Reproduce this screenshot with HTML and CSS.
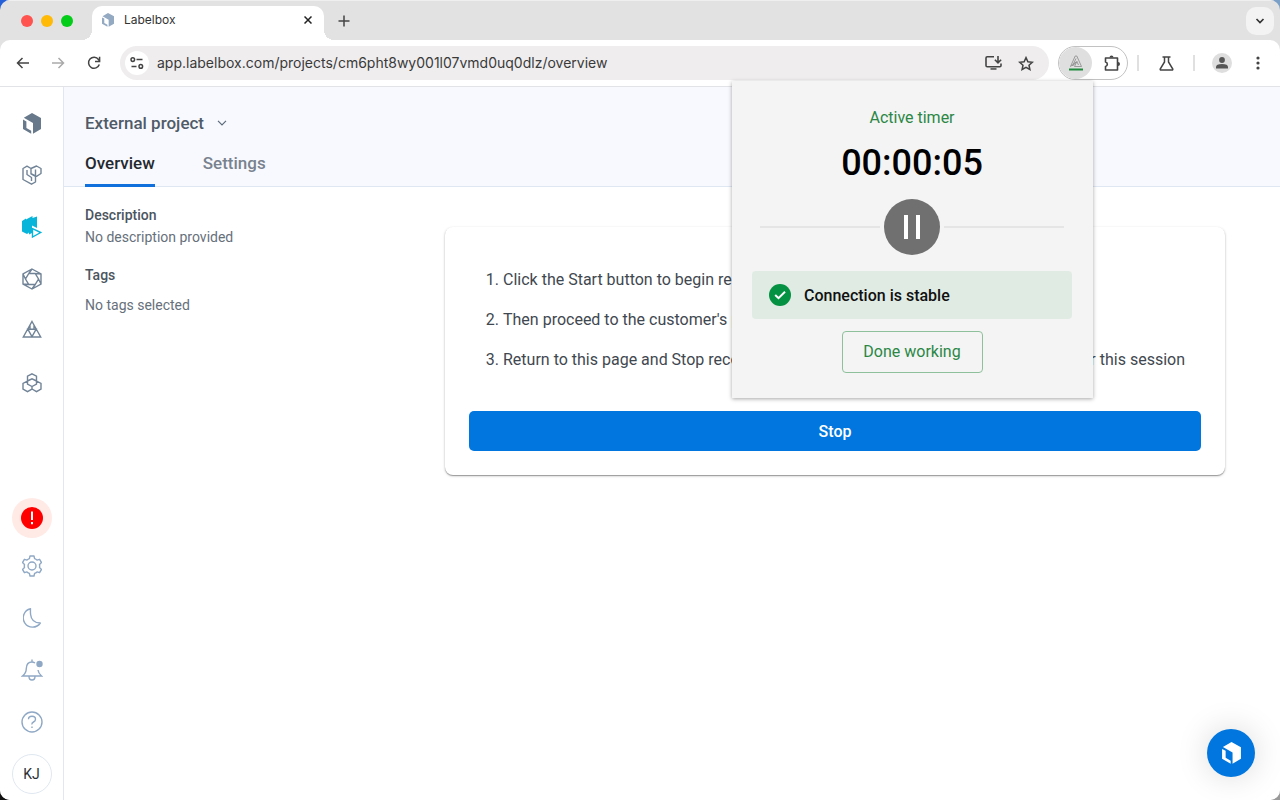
FILE: index.html
```html
<!DOCTYPE html>
<html lang="en">
<head>
  <meta charset="UTF-8" />
  <meta name="viewport" content="width=device-width, initial-scale=1.0"/>
  <title>Labelbox</title>
  <link rel="stylesheet" href="styles.css">
</head>
<body>

  <!-- shared logo -->
  <svg class="defs" width="0" height="0" aria-hidden="true">
    <symbol id="logo" viewBox="0 0 18 21">
      <path d="M9 0 18 5V16L10 20.7V10L.8 4.8Z"/>
      <path d="M0 6.6 3.4 8.4V15L8.2 17.8V20.7L0 16Z"/>
    </symbol>
  </svg>

  <div class="window">

    <!-- Tab strip -->
    <div class="tabstrip">
      <div class="lights"><i class="red"></i><i class="yellow"></i><i class="green"></i></div>
      <div class="tab">
        <svg class="favicon" width="12" height="14"><use href="#logo"/></svg>
        <span class="tab-title">Labelbox</span>
        <button class="plain" aria-label="Close tab">
          <svg width="8" height="8" viewBox="0 0 8 8"><path d="M.5.5l7 7M7.500.5l-7 7" stroke="#222" stroke-width="1.5"/></svg>
        </button>
      </div>
      <button class="plain new-tab" aria-label="New tab">
        <svg width="12" height="12" viewBox="0 0 12 12"><path d="M6 .5v11M.5 6h11" stroke="#444" stroke-width="1.5"/></svg>
      </button>
      <button class="plain tab-search" aria-label="Search tabs">
        <svg width="10" height="6" viewBox="0 0 10 6"><path d="M1.500 1 5 4.500 8.500 1" fill="none" stroke="#333" stroke-width="1.700"/></svg>
      </button>
    </div>

    <!-- Toolbar -->
    <div class="toolbar">
      <button class="plain nav" aria-label="Back">
        <svg width="13" height="12" viewBox="0 0 13 12"><path d="M13 6H1.500M6.500 1l-5 5 5 5" fill="none" stroke="#444" stroke-width="1.500"/></svg>
      </button>
      <button class="plain nav" aria-label="Forward">
        <svg width="13" height="12" viewBox="0 0 13 12"><path d="M0 6h11.500M6.500 1l5 5-5 5" fill="none" stroke="#aaa" stroke-width="1.500"/></svg>
      </button>
      <button class="plain nav" aria-label="Reload">
        <svg width="14" height="14" viewBox="0 0 14 14"><path d="M12.300 8.500A5.500 5.500 0 1 1 11.500 3.500L12.600 5" fill="none" stroke="#444" stroke-width="1.500"/><path d="M12.600.8V5.400H8" fill="none" stroke="#444" stroke-width="1.500"/></svg>
      </button>
      <div class="omnibox">
        <span class="site-info">
          <svg width="14" height="12" viewBox="0 0 14 12" fill="none" stroke="#444" stroke-width="1.500"><circle cx="2.800" cy="2.600" r="1.800"/><path d="M6.500 2.600h6M1.500 9.400h5"/><circle cx="10.800" cy="9.400" r="1.800"/></svg>
        </span>
        <input type="text" class="url" aria-label="Address" value="app.labelbox.com/projects/cm6pht8wy001l07vmd0uq0dlz/overview" />
        <button class="plain" aria-label="Install app">
          <svg width="17" height="16" viewBox="0 0 17 16" fill="none" stroke="#444" stroke-width="1.600"><path d="M9 1.800H2.200Q1 1.800 1 3V10.500Q1 11.800 2.200 11.800H14.800Q16 11.800 16 10.500V8.500"/><path d="M13 1V7.500M9.900 4.800 13 7.900 16.100 4.800"/><path d="M5.500 13.200h6v1.500h-6z" fill="#444" stroke="none"/></svg>
        </button>
        <button class="plain" aria-label="Bookmark this page">
          <svg width="16" height="15" viewBox="0 0 16 15"><path d="M8 1.600 9.900 5.700 14.300 6.200 11 9.200 11.900 13.500 8 11.300 4.100 13.500 5 9.200 1.700 6.200 6.100 5.700Z" fill="none" stroke="#444" stroke-width="1.500"/></svg>
        </button>
      </div>
      <div class="extensions">
        <button class="plain ext-active" aria-label="Timer extension">
          <svg width="14" height="16" viewBox="0 0 14 16"><path d="M1.500 11.500 6.200 1h1.600l4.700 10.500H5.500L7.800 6.500 9.500 10M7 3.500 3.500 11 8 6.500M1.500 11.500 7 7" fill="none" stroke="#888" stroke-width=".8"/><path d="M0 13.500h14v2H0z" fill="#1f8a3b"/></svg>
        </button>
        <button class="plain ext-menu" aria-label="Extensions">
          <svg width="17" height="17" viewBox="0 0 17 17"><path d="M1.500 3H13.500V15H1.500V11.500A2.300 2.300 0 0 0 1.500 7Z" fill="none" stroke="#444" stroke-width="1.600" stroke-linejoin="round"/><path d="M5.500 2.500a2 2 0 0 1 4 0ZM14 7a2 2 0 0 1 0 4Z" fill="#444"/></svg>
        </button>
      </div>
      <span class="sep"></span>
      <button class="plain tool" aria-label="Labs">
        <svg width="15" height="15" viewBox="0 0 15 15"><path d="M3.500 1h8M5.500 1v5L1.200 13Q1 14 2 14h11q1 0 .8-1L9.500 6V1" fill="none" stroke="#444" stroke-width="1.500"/></svg>
      </button>
      <span class="sep"></span>
      <button class="plain tool" aria-label="Profile">
        <svg width="20" height="20" viewBox="0 0 20 20"><circle cx="10" cy="10" r="10" fill="#dedede"/><circle cx="10" cy="7" r="2.900" fill="#555"/><path d="M4 15.500V14q0-3 6-3t6 3v1.500Z" fill="#555"/></svg>
      </button>
      <button class="plain tool" aria-label="Browser menu">
        <svg width="4" height="14" viewBox="0 0 4 14" fill="#444"><circle cx="2" cy="2" r="1.600"/><circle cx="2" cy="7" r="1.600"/><circle cx="2" cy="12" r="1.600"/></svg>
      </button>
    </div>

    <div class="app">

      <!-- Sidebar -->
      <nav class="sidebar">
        <a href="#" class="item" aria-label="Home"><svg class="mark" width="18" height="21"><use href="#logo"/></svg></a>
        <a href="#" class="item" aria-label="Catalog">
          <svg class="line" width="20" height="20" viewBox="0 0 20 20" stroke-linejoin="round"><path d="M1 3.500 5 1.200 9 3.500V9L13.500 11.500V17L9.500 19.200 1 14.500ZM5 5V9.500L9.500 12.500V16M9 3.500 14.500 1 19 3.500V8.500L14.500 11.300 9 8.500M13.500 4.500V11"/></svg>
        </a>
        <a href="#" class="item" aria-label="Annotate">
          <svg width="20" height="22" viewBox="0 0 20 22"><path d="M0 5 4 2.500V3.500L10.500 0V2L15 .5V12L10 9.500V17L7 18.500V16.500L5 18 0 15.500Z" fill="#08b5da"/><path d="M10.500 12.500V21L18.700 16.500Z" fill="#fff" stroke="#08b5da" stroke-width="1.400"/></svg>
        </a>
        <a href="#" class="item" aria-label="Model">
          <svg class="line" width="20" height="22" viewBox="0 0 20 22"><path d="M10 1 19 6V16L10 21 1 16V6ZM6.800 5.500H13.200L16.500 11 13.200 16.500H6.800L3.500 11ZM10 1 6.800 5.500M19 6 13.200 5.500M19 16 16.500 11M10 21 13.200 16.500M1 16 6.800 16.500M1 6 3.500 11"/></svg>
        </a>
        <a href="#" class="item" aria-label="Workforce">
          <svg class="line" width="20" height="22" viewBox="0 0 20 22"><path d="M10 1.500 18.700 17H1.300ZM5.800 9.200h8.400L10 16.500ZM8 5.500V9M12 5.500V9"/></svg>
        </a>
        <a href="#" class="item" aria-label="Foundry">
          <svg class="line" width="20" height="20" viewBox="0 0 20 20"><path d="M10 .8 14.500 3.200V11L10 13.500 5.500 11V3.200ZM5.500 8 1 10.500V16L5.500 18.600 10 16V13.500M14.500 8 19 10.500V16L14.500 18.600 10 16M5.500 8 10 5.800 14.500 8"/></svg>
        </a>

        <div class="spacer"></div>

        <a href="#" class="item alert" aria-label="Alerts">
          <span><svg width="22" height="22" viewBox="0 0 22 22"><circle cx="11" cy="11" r="11" fill="#f00"/><path d="M11 4.500v8.500M11 15v2.200" stroke="#fff" stroke-width="2"/></svg></span>
        </a>
        <a href="#" class="item soft" aria-label="Settings">
          <svg class="line" width="20" height="22" viewBox="0 0 20 22"><path d="M8 1H12L12.600 3.700Q14 4.200 15 5.100L17.600 4.300 19.500 7.600 17.500 9.500Q17.800 11 17.500 12.500L19.500 14.400 17.600 17.700 15 16.900Q14 17.800 12.600 18.300L12 21H8L7.400 18.300Q6 17.800 5 16.900L2.400 17.700.5 14.400 2.500 12.500Q2.200 11 2.500 9.500L.5 7.600 2.400 4.300 5 5.100Q6 4.200 7.400 3.700Z" stroke-linejoin="round"/><circle cx="10" cy="11" r="4"/></svg>
        </a>
        <a href="#" class="item soft" aria-label="Dark mode">
          <svg class="line" width="18" height="20" viewBox="0 0 18 20"><path d="M7.500.8A9.300 9.300 0 1 0 17.300 15Q8.500 15 7.600 6.500 7.300 3.500 7.500.8Z" stroke-linejoin="round"/></svg>
        </a>
        <a href="#" class="item soft" aria-label="Notifications">
          <svg class="line" width="22" height="22" viewBox="0 0 22 22"><path d="M14 4Q12.500 3 11 3 5.500 3 5.300 9.500 5.300 14 1.500 17H20.500Q17.500 14.500 17 11M11 .5V3M8 17.500Q8 21 11 21T14 17.500"/><circle cx="18.500" cy="5" r="3.200" fill="#8fa8c5" stroke="none"/></svg>
        </a>
        <a href="#" class="item soft" aria-label="Help">
          <svg class="line" width="22" height="22" viewBox="0 0 22 22"><circle cx="11" cy="11" r="10"/><path d="M7.500 8.200Q7.500 5.300 11 5.300T14.500 8.300Q14.500 10 12.500 11T11 13.500M11 15.500v1.600"/></svg>
        </a>
        <a href="#" class="item" aria-label="Account"><span class="avatar">KJ</span></a>
      </nav>

      <div class="page">
        <header class="page-header">
          <button class="plain project">
            External project
            <svg width="10" height="6" viewBox="0 0 10 6"><path d="M1 .8 5 4.800 9 .8" fill="none" stroke="#5c6b7c" stroke-width="1.200"/></svg>
          </button>
          <div class="tabs">
            <a href="#" class="current">Overview</a>
            <a href="#">Settings</a>
          </div>
        </header>

        <main class="content">
          <section class="details">
            <h2>Description</h2>
            <p>No description provided</p>
            <h2>Tags</h2>
            <p class="tags">No tags selected</p>
          </section>

          <section class="card">
            <ol>
              <li>Click the Start button to begin recording</li>
              <li>Then proceed to the customer's platform</li>
              <li><div class="split"><span>Return to this page and Stop recording</span> <span>for this session</span></div></li>
            </ol>
            <button class="stop">Stop</button>
          </section>
        </main>
      </div>
    </div>

    <!-- Extension popup -->
    <div class="popup">
      <p class="label">Active timer</p>
      <div class="time">00:00:05</div>
      <div class="control">
        <button class="plain pause" aria-label="Pause timer"><i></i><i></i></button>
      </div>
      <div class="notice">
        <svg width="22" height="22" viewBox="0 0 22 22"><circle cx="11" cy="11" r="11" fill="#059142"/><path d="M6.200 11 9.500 14.200 16 7.800" fill="none" stroke="#fff" stroke-width="2"/></svg>
        Connection is stable
      </div>
      <button class="done">Done working</button>
    </div>

    <button class="plain launcher" aria-label="Open assistant">
      <svg width="19" height="22"><use href="#logo"/></svg>
    </button>
  </div>

</body>
</html>
```

FILE: styles.css
```css
* {
  box-sizing: border-box;
}

body {
  margin: 0;
  background: linear-gradient(90deg, #2560d8 50%, #7ba0c8 50%) top / 100% 50% no-repeat,
    linear-gradient(90deg, #111 50%, #999 50%);
  font-family: Roboto, "Liberation Sans", sans-serif;
  color: #3f4850;
}

p, h2, ol {
  margin: 0;
  padding: 0;
}

a {
  color: inherit;
  text-decoration: none;
}

svg {
  display: block;
  flex: none;
}

.defs {
  position: absolute;
}

.plain {
  border: none;
  background: none;
  padding: 0;
  font: inherit;
  color: inherit;
  display: flex;
  align-items: center;
  justify-content: center;
  flex: none;
  cursor: pointer;
}

.window {
  position: relative;
  min-height: 100vh;
  display: flex;
  flex-direction: column;
  background: #e2e2e2;
  border-radius: 10px;
  overflow: hidden;
}

/* tab strip */
.tabstrip {
  height: 40px;
  display: flex;
  align-items: center;
  padding: 0 6px 0 21px;
  border-top: 1px solid #efefef;
}

.lights {
  display: flex;
  gap: 8px;
  width: 71px;
}

.lights i {
  width: 12px;
  height: 12px;
  border-radius: 50%;
}

.red { background: #ff5350; }
.yellow { background: #ffb907; }
.green { background: #03cd18; }

.tab {
  position: relative;
  align-self: flex-end;
  width: 232px;
  height: 34px;
  padding: 0 12px 6px 10px;
  display: flex;
  align-items: center;
  background: #fff;
  border-radius: 10px 10px 0 0;
  font: 12px/16px Inter, sans-serif;
  color: #333;
}

/* flared feet of the tab */
.tab::before,
.tab::after {
  content: "";
  position: absolute;
  bottom: 0;
  width: 10px;
  height: 10px;
}

.tab::before {
  right: 100%;
  background: radial-gradient(circle at 0 0, transparent 10px, #fff 10px);
}

.tab::after {
  left: 100%;
  background: radial-gradient(circle at 100% 0, transparent 10px, #fff 10px);
}

.favicon {
  fill: #94a9c2;
}

.tab-title {
  flex: 1;
  margin-left: 10px;
}

.new-tab {
  margin-left: 14px;
}

.tab-search {
  width: 28px;
  height: 28px;
  margin-left: auto;
  border-radius: 10px;
  background: #f3f3f3;
}

/* toolbar */
.toolbar {
  height: 47px;
  display: flex;
  align-items: center;
  padding: 0 4px;
  background: #fff;
  border-bottom: 1px solid #e1e3e6;
  border-radius: 10px 10px 0 0;
}

.nav {
  width: 36px;
  height: 32px;
}

.omnibox {
  flex: 1;
  height: 34px;
  margin: 0 9px 0 8px;
  padding: 0 15px 0 5px;
  display: flex;
  align-items: center;
  gap: 16px;
  background: #efedee;
  border-radius: 17px;
}

.site-info {
  width: 24px;
  height: 24px;
  margin-right: -8px;
  display: flex;
  align-items: center;
  justify-content: center;
  background: #fff;
  border-radius: 50%;
}

.url {
  flex: 1;
  min-width: 0;
  padding: 0;
  border: none;
  outline: none;
  background: none;
  font: 14px/20px Inter, sans-serif;
  color: #3a3a3a;
}

.extensions {
  width: 70px;
  height: 34px;
  display: flex;
  border: 1px solid #c2c2c2;
  border-radius: 17px;
  overflow: hidden;
}

.ext-active {
  width: 33px;
  background: #dfdfdf;
  border-radius: 50%;
}

.ext-menu {
  flex: 1;
  padding-left: 6px;
}

.sep {
  width: 2px;
  height: 16px;
  margin: 0 9px;
  background: #e0e0e0;
}

.tool {
  width: 36px;
  height: 32px;
}

/* app */
.app {
  flex: 1;
  display: flex;
  background: #fff;
}

.sidebar {
  width: 64px;
  flex: none;
  display: flex;
  flex-direction: column;
  padding-top: 10px;
  border-right: 1px solid #e1e7f2;
}

.item {
  height: 52px;
  display: flex;
  align-items: center;
  justify-content: center;
}

.mark {
  fill: #68798b;
}

.line {
  fill: none;
  stroke: #718397;
  stroke-width: 1.4;
}

.soft .line {
  stroke: #8fa8c5;
}

.spacer {
  flex: 1;
}

.alert {
  height: 44px;
}

.alert span,
.avatar {
  width: 40px;
  height: 40px;
  border-radius: 50%;
  display: flex;
  align-items: center;
  justify-content: center;
}

.alert span {
  background: #ffeae6;
}

.avatar {
  border: 1px solid #dfe7f0;
  font-size: 14px;
  color: #2b3036;
}

.page {
  flex: 1;
  min-width: 0;
}

.page-header {
  height: 100px;
  padding: 24px 21px 0;
  display: flex;
  flex-direction: column;
  justify-content: space-between;
  align-items: flex-start;
  background: #f8f9fe;
  border-bottom: 1px solid #dfe7f2;
}

.project {
  gap: 13px;
  font-size: 17px;
  font-weight: 500;
  line-height: 24px;
  color: #505b68;
}

.tabs {
  display: flex;
  gap: 48px;
  font-size: 17px;
  font-weight: 500;
  line-height: 24px;
  color: #78828e;
}

.tabs a {
  padding-bottom: 9px;
  margin-bottom: -1px;
  border-bottom: 3px solid transparent;
}

.tabs .current {
  color: #24292f;
  border-color: #1270dc;
}

.content {
  display: grid;
  grid-template-columns: 320px 1fr;
  gap: 40px;
  align-items: start;
  padding: 18px 55px 40px 21px;
}

.details {
  font-size: 14px;
  line-height: 20px;
  color: #66707b;
}

.details h2 {
  font-size: 14px;
  font-weight: 500;
  line-height: 20px;
  color: #4b5560;
}

.details p {
  margin: 2px 0 18px;
}

.details .tags {
  margin-top: 10px;
}

.card {
  margin-top: 22px;
  padding: 33px 24px 24px;
  background: #fff;
  border-radius: 8px;
  box-shadow: 0 1px 1px rgba(0, 0, 0, 0.3), 0 1px 3px rgba(0, 0, 0, 0.2);
}

.card ol {
  padding: 0 16px 0 34px;
  margin-bottom: 31px;
  font-size: 16px;
  line-height: 40px;
}

.card li {
  white-space: nowrap;
}

.split {
  display: flex;
  justify-content: space-between;
}

.stop {
  width: 100%;
  height: 40px;
  padding: 2px 0 0;
  border: none;
  border-radius: 5px;
  background: #0076de;
  color: #fff;
  font: 500 16px/24px Roboto, sans-serif;
  cursor: pointer;
}

/* popup */
.popup {
  position: absolute;
  top: 81px;
  right: 187px;
  width: 361px;
  padding: 25px 21px 25px 20px;
  display: flex;
  flex-direction: column;
  align-items: center;
  background: #f4f4f4;
  box-shadow: 0 1px 4px rgba(0, 0, 0, 0.35);
}

.label {
  font-size: 16px;
  line-height: 24px;
  color: #2a8745;
}

.time {
  margin: 9px 0 12px;
  font-size: 36px;
  line-height: 48px;
  font-weight: 500;
  color: #000;
}

.control {
  align-self: stretch;
  margin: 0 8px 16px;
  display: flex;
  align-items: center;
  gap: 4px;
}

.control::before,
.control::after {
  content: "";
  flex: 1;
  height: 2px;
  background: #e5e5e5;
}

.pause {
  width: 56px;
  height: 56px;
  gap: 8px;
  border-radius: 50%;
  background: #707070;
}

.pause i {
  width: 4px;
  height: 24px;
  background: #fff;
}

.notice {
  align-self: stretch;
  height: 48px;
  padding: 0 17px;
  display: flex;
  align-items: center;
  gap: 13px;
  border-radius: 4px;
  background: #e0ebe3;
  color: #111;
  font-size: 16px;
  font-weight: 500;
}

.done {
  width: 141px;
  height: 42px;
  margin-top: 12px;
  border: 1px solid #8fc09c;
  border-radius: 4px;
  background: none;
  color: #2a8745;
  font: 16px/24px Roboto, sans-serif;
  cursor: pointer;
}

/* chat launcher */
.launcher {
  position: absolute;
  right: 25px;
  bottom: 23px;
  width: 48px;
  height: 48px;
  border-radius: 50%;
  background: #0076de;
  fill: #fff;
  box-shadow: 0 0 32px rgba(0, 0, 0, 0.15);
}
```
